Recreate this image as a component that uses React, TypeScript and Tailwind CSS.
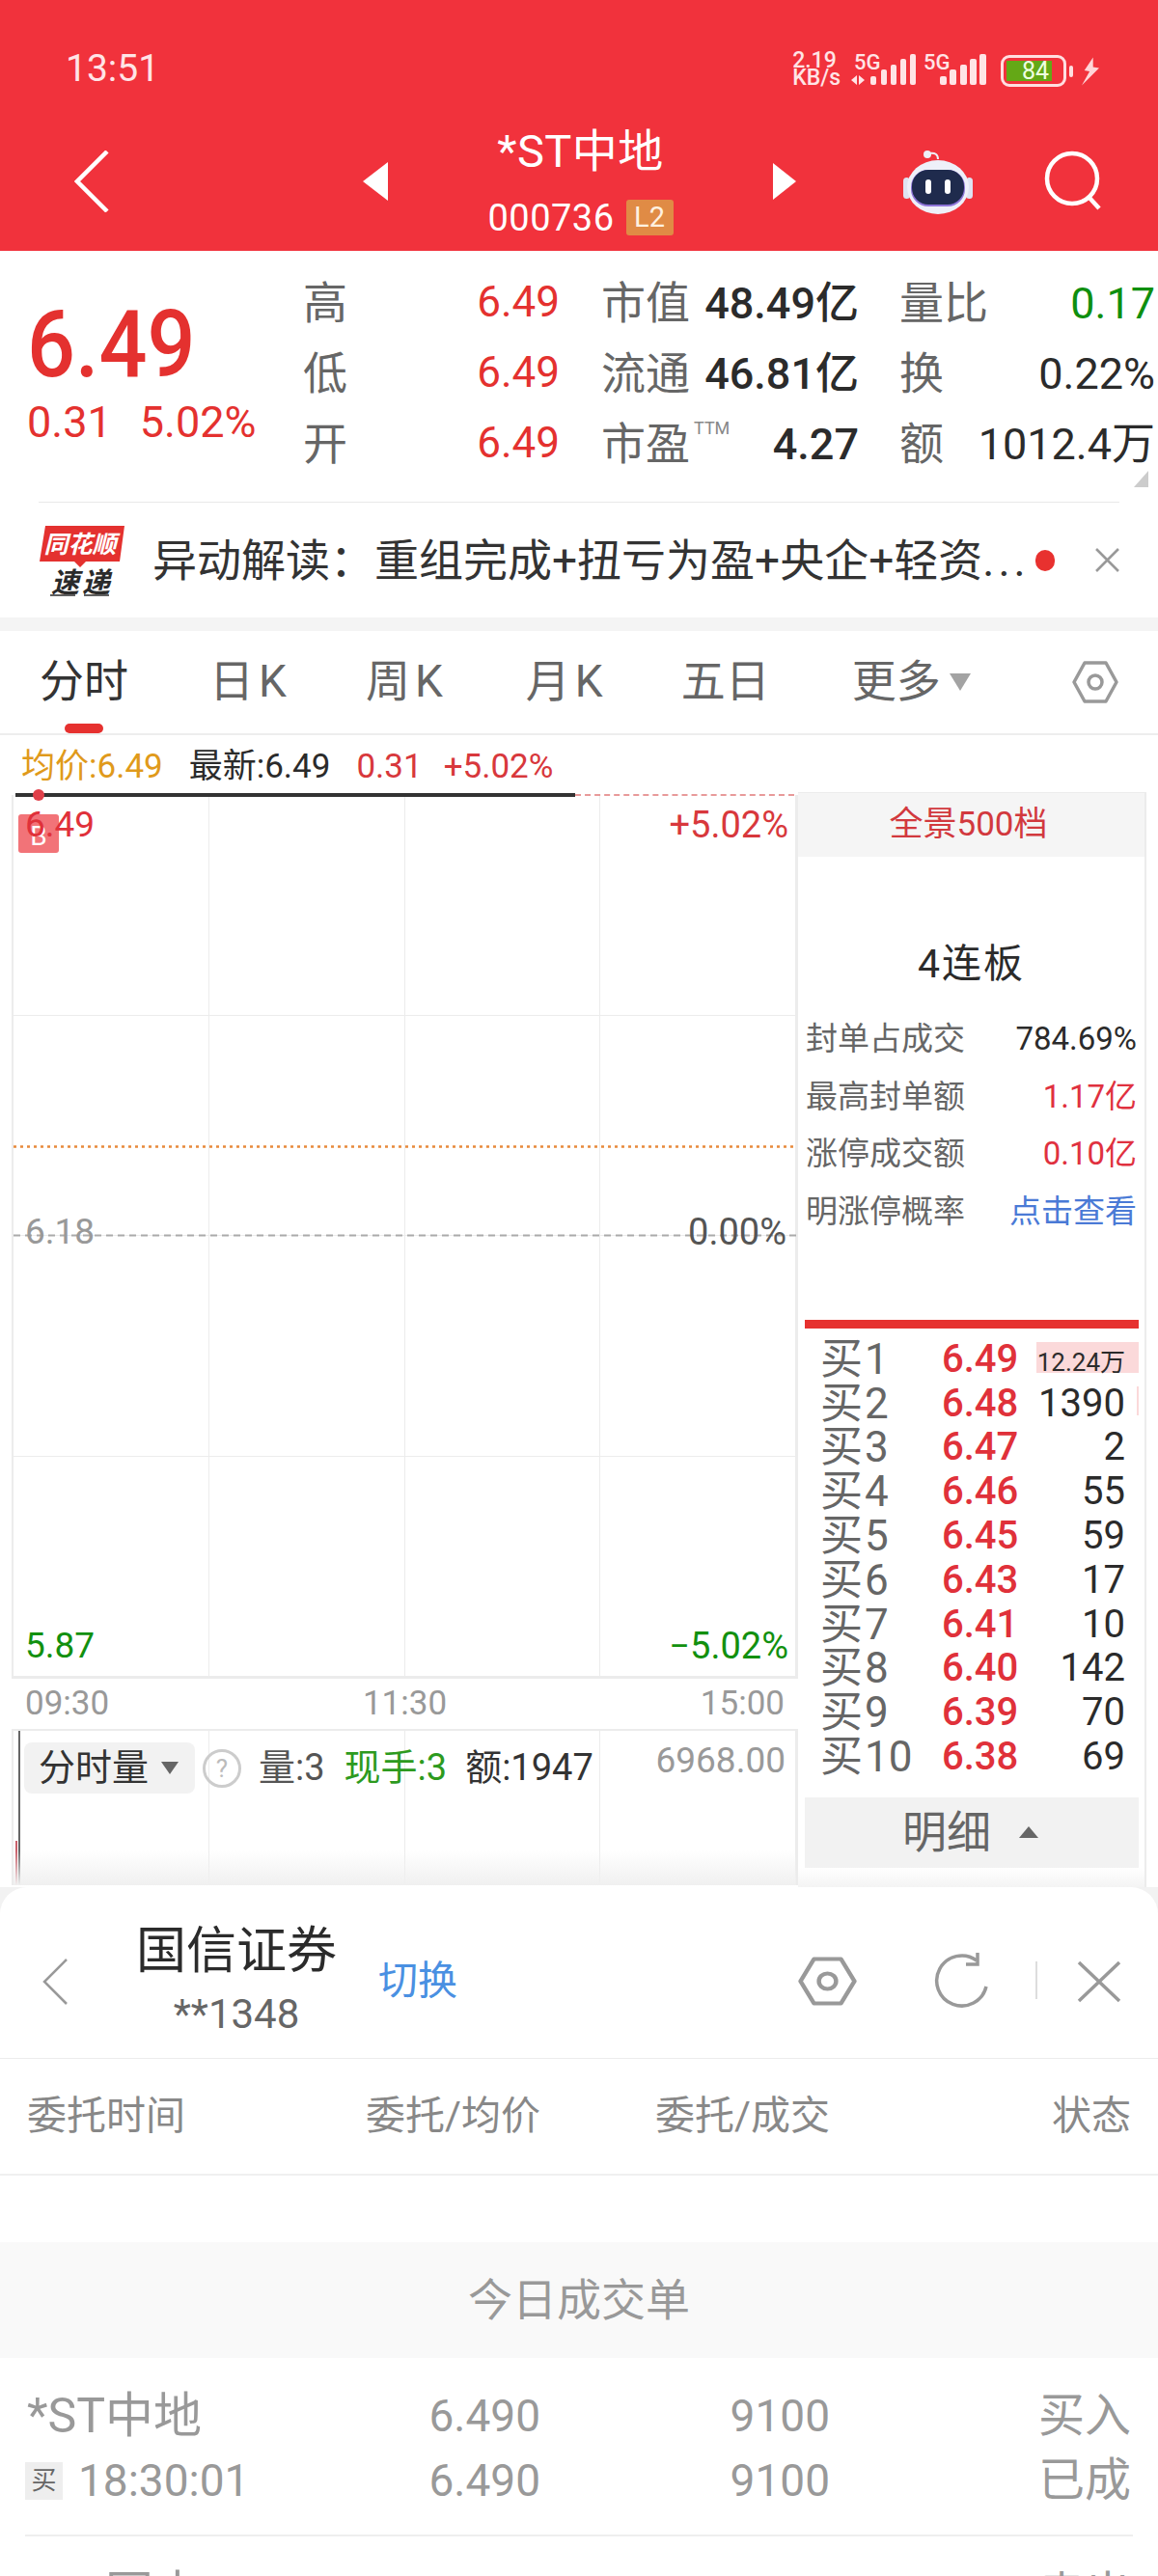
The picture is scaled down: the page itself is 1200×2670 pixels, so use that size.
import React from 'react'

const stats = [
  { a: '高', b: '市值', c: '48.49亿', d: '量比', e: '0.17', eColor: 'text-[#0f8f0f]' },
  { a: '低', b: '流通', c: '46.81亿', d: '换', e: '0.22%', eColor: 'text-[#2b2b2b]' },
  { a: '开', b: '市盈', c: '4.27', d: '额', e: '1012.4万', eColor: 'text-[#2b2b2b]', ttm: true },
]

const limitRows = [
  { label: '封单占成交', value: '784.69%', color: 'text-[#2b2b2b]' },
  { label: '最高封单额', value: '1.17亿', color: 'text-[#e0313f]' },
  { label: '涨停成交额', value: '0.10亿', color: 'text-[#e0313f]' },
  { label: '明涨停概率', value: '点击查看', color: 'text-[#4a7ad6]' },
]

const book = [
  ['1', '6.49', '12.24万'],
  ['2', '6.48', '1390'],
  ['3', '6.47', '2'],
  ['4', '6.46', '55'],
  ['5', '6.45', '59'],
  ['6', '6.43', '17'],
  ['7', '6.41', '10'],
  ['8', '6.40', '142'],
  ['9', '6.39', '70'],
  ['10', '6.38', '69'],
]

const gridCells = Array.from({ length: 16 }, (_, i) => i)
const colClass = 'grid grid-cols-[332px_200px_300px_312px] pl-[28px]'

function HexIcon({ className }: { className: string }) {
  return (
    <svg viewBox="0 0 48 46" preserveAspectRatio="none" className={className} fill="none" stroke="#999" strokeWidth="3.5" strokeLinejoin="round">
      <path d="M13 3h22l11 20-11 20H13L2 23z" />
      <circle cx="24" cy="23" r="7" />
    </svg>
  )
}

function Robot() {
  return (
    <svg viewBox="0 0 72 68" className="w-[72px] h-[68px] ml-[111px]">
      <circle cx="25" cy="6" r="4" fill="#eef0f8" />
      <path d="M27 5c6-1 9 1 9 6" fill="none" stroke="#eef0f8" strokeWidth="2" />
      <rect x="0" y="30" width="7" height="22" rx="3.5" fill="#dfe3f2" />
      <rect x="65" y="30" width="7" height="22" rx="3.5" fill="#dfe3f2" />
      <ellipse cx="36" cy="40" rx="32" ry="28" fill="#eef0f9" />
      <rect x="8" y="22" width="56" height="38" rx="18" fill="#8d74d8" />
      <rect x="9" y="22" width="54" height="36" rx="17" fill="#1f2b4d" />
      <rect x="23" y="32" width="6" height="15" rx="3" fill="#fff" />
      <rect x="43" y="32" width="6" height="15" rx="3" fill="#fff" />
    </svg>
  )
}

function StatusBar() {
  return (
    <div className="flex items-end justify-between h-[40px] pl-[68px] pr-[61px] text-[#ffe4e6]">
      <span className="text-[39px] leading-[40px] -mb-[1px]">13:51</span>
      <div className="flex items-end">
        <div className="flex flex-col items-start text-[23px] leading-[18px] font-medium">
          <span>2.19</span>
          <span>KB/s</span>
        </div>
        <div className="ml-[11px] w-[67px] relative h-[36px]">
          <span className="absolute left-[3px] top-[0px] text-[22px] leading-none font-medium">5G</span>
          <svg viewBox="0 0 67 36" className="absolute inset-0 w-[67px] h-[36px]" fill="#ffe4e6">
            <path d="M0 29l6-5v10zM8 24l6 5-6 5z" />
            <rect x="20" y="25" width="6" height="9" rx="2" />
            <rect x="31" y="18" width="6" height="16" rx="2" />
            <rect x="41" y="13" width="6" height="21" rx="2" />
            <rect x="51" y="7" width="6" height="27" rx="2" />
            <rect x="61" y="2" width="6" height="32" rx="2" />
          </svg>
        </div>
        <div className="ml-[8px] w-[65px] relative h-[36px]">
          <span className="absolute left-0 top-[0px] text-[22px] leading-none font-medium">5G</span>
          <svg viewBox="0 0 65 36" className="absolute inset-0 w-[65px] h-[36px]" fill="#ffe4e6">
            <rect x="17" y="25" width="7" height="9" rx="2" />
            <rect x="27" y="18" width="7" height="16" rx="2" />
            <rect x="38" y="13" width="7" height="21" rx="2" />
            <rect x="48" y="7" width="7" height="27" rx="2" />
            <rect x="58" y="2" width="7" height="32" rx="2" />
          </svg>
        </div>
        <div className="ml-[15px] w-[68px] h-[33px] rounded-[9px] border-[3px] border-[#ffdfe1] p-[3px]">
          <div className="w-[47px] h-full bg-[#64a816] flex items-center justify-end pr-[3px] text-[25px] leading-none text-[#f0ffe0]">84</div>
        </div>
        <div className="ml-[3px] w-[4px] h-[12px] rounded-[2px] bg-[#ffdfe1] mb-[10px]" />
        <svg viewBox="0 0 20 32" className="ml-[9px] w-[18px] h-[32px]" fill="#ffd5d8">
          <path d="M13 0L3 15l6 1-9 16L20 12l-7-1z" />
        </svg>
      </div>
    </div>
  )
}

function NavBar() {
  return (
    <div className="flex items-center mt-[40px] h-[115px] text-white">
      <svg viewBox="0 0 36 64" className="ml-[77px] w-[36px] h-[64px]" fill="none" stroke="#fff" strokeWidth="4.5">
        <path d="M34 1L3 32l31 31" />
      </svg>
      <div className="ml-[263px] w-0 h-0 border-y-[20px] border-y-transparent border-r-[26px] border-r-white" />
      <div className="w-[399px] flex flex-col items-center">
        <span className="text-[47px] leading-[56px] tracking-[0.5px]">*ST中地</span>
        <div className="flex items-center mt-[20px]">
          <span className="text-[38px] leading-[42px] tracking-[0.5px]">000736</span>
          <span className="ml-[12px] w-[49px] h-[37px] bg-[#e08b45] rounded-[3px] text-[#fff1e0] text-[29px] leading-[37px] text-center">L2</span>
        </div>
      </div>
      <div className="w-0 h-0 border-y-[19px] border-y-transparent border-l-[24px] border-l-white" />
      <Robot />
      <svg viewBox="0 0 60 64" className="ml-[74px] w-[60px] h-[64px]" fill="none" stroke="#fff" strokeWidth="4.5">
        <circle cx="29" cy="29" r="26" />
        <path d="M47 49l10 11" />
      </svg>
    </div>
  )
}

function QuoteBlock() {
  return (
    <div className="relative h-[261px] flex">
      <div className="w-[314px] pl-[28px] text-[#e4312f]">
        <div className="text-[88px] leading-[90px] font-medium mt-[52px] scale-y-110 origin-center">6.49</div>
        <div className="flex text-[45px] leading-[50px] mt-[11px]">
          <span>0.31</span>
          <span className="ml-[29px]">5.02%</span>
        </div>
      </div>
      <div className="flex flex-col pt-[18px]">
        {stats.map((s) => (
          <div key={s.a} className="flex h-[73px] items-center text-[46px] text-[#666]">
            <div className="w-[266px] flex justify-between">
              <span>{s.a}</span>
              <span className="text-[#e4312f] text-[44px]">6.49</span>
            </div>
            <div className="w-[267px] ml-[43px] flex justify-between items-center">
              <span className="relative">
                {s.b}
                {s.ttm && <span className="absolute left-[96px] top-[8px] text-[18px] leading-[20px] text-[#888]">TTM</span>}
              </span>
              <span className="text-[#2b2b2b] text-[45px] font-medium">{s.c}</span>
            </div>
            <div className="w-[265px] ml-[42px] flex justify-between items-center">
              <span>{s.d}</span>
              <span className={`${s.eColor} text-[45px]`}>{s.e}</span>
            </div>
          </div>
        ))}
      </div>
      <div className="absolute right-[10px] top-[228px] w-0 h-0 border-b-[17px] border-b-[#cccccc] border-l-[15px] border-l-transparent" />
      <div className="absolute left-[40px] right-[40px] bottom-0 h-[1px] bg-[#e9e9e9]" />
    </div>
  )
}

function NoticeBar() {
  return (
    <div className="h-[133px] flex items-center border-b-[14px] border-b-[#f4f4f4]">
      <svg viewBox="0 0 88 74" className="ml-[41px] w-[88px] h-[74px] shrink-0">
        <path d="M6 1h82l-5 37H48l-6 6-6-6H0z" fill="#e4312f" />
        <text x="42" y="29" textAnchor="middle" fontSize="25" fontWeight="700" fontStyle="italic" fill="#fff">同花顺</text>
        <text x="44" y="70" textAnchor="middle" fontSize="29" fontWeight="700" fontStyle="italic" letterSpacing="3" fill="#2b2b2b">速递</text>
        <path d="M11 73h26M46 73h26" stroke="#2b2b2b" strokeWidth="1.5" />
      </svg>
      <span className="ml-[29px] w-[915px] shrink-0 text-[46px] leading-[56px] text-[#333] whitespace-nowrap">
        异动解读：重组完成+扭亏为盈+央企+轻资<span className="tracking-[4px]">...</span>
      </span>
      <div className="w-[20px] h-[22px] rounded-full bg-[#e8312f] shrink-0" />
      <svg viewBox="0 0 24 24" className="ml-[42px] w-[25px] h-[25px] shrink-0" fill="none" stroke="#999" strokeWidth="2.5">
        <path d="M1 1l22 22M23 1L1 23" />
      </svg>
    </div>
  )
}

function Tabs() {
  return (
    <div className="relative flex items-center h-[108px] pl-[41px] pb-[1px] border-b-2 border-b-[#ededed] text-[46px] text-[#666] whitespace-nowrap">
      <span className="text-[#333]">分时</span>
      <span className="ml-[84px] tracking-[5px]">日K</span>
      <span className="ml-[77px] tracking-[5px]">周K</span>
      <span className="ml-[81px] tracking-[5px]">月K</span>
      <span className="ml-[76px]">五日</span>
      <span className="ml-[85px]">更多</span>
      <div className="ml-[9px] w-0 h-0 border-x-[11px] border-x-transparent border-t-[18px] border-t-[#a3a3a3]" />
      <HexIcon className="ml-[105px] w-[48px] h-[46px]" />
      <div className="absolute left-[67px] bottom-0 w-[40px] h-[10px] rounded-full bg-[#e6312f]" />
    </div>
  )
}

function Legend() {
  return (
    <div className="flex items-center h-[59px] pl-[22px] pt-[8px] text-[35px] whitespace-nowrap">
      <span className="text-[#e09a1b]">均价:6.49</span>
      <span className="ml-[27px] text-[#2b2b2b]">最新:6.49</span>
      <span className="ml-[27px] text-[#d8383c]">0.31</span>
      <span className="ml-[22px] text-[#d8383c]">+5.02%</span>
    </div>
  )
}

function PriceChart() {
  return (
    <div className="relative h-[914px] mt-[3px] grid grid-cols-4 grid-rows-4 border-l-2 border-r-2 border-[#ececec]">
      {gridCells.map((i) => (
        <div key={i} className="border-r border-b border-[#ececec]" />
      ))}
      <div className="absolute left-[2px] top-[-2px] w-[580px] h-[4px] bg-[#333]" />
      <div className="absolute left-[582px] right-[2px] top-[-1px] border-t-2 border-dashed border-[#e89a9a]" />
      <div className="absolute left-[20px] top-[-6px] w-[12px] h-[12px] rounded-full bg-[#e0404a]" />
      <div className="absolute left-[5px] top-[20px] w-[42px] h-[40px] rounded-[3px] bg-[#f27378] text-white text-[28px] leading-[46px] text-center">B</div>
      <div className="absolute left-[12px] top-[9px] text-[37px] leading-[44px] text-[#e0313a]">6.49</div>
      <div className="absolute right-[8px] top-[9px] text-[38px] leading-[44px] text-[#d8383c]">+5.02%</div>
      <svg className="absolute left-0 top-[363px] w-full h-[3px]">
        <line x1="0" y1="1.5" x2="100%" y2="1.5" stroke="#e88a3c" strokeWidth="2.5" strokeDasharray="3 4" />
      </svg>
      <svg className="absolute left-0 top-[455px] w-full h-[3px]">
        <line x1="0" y1="1.5" x2="100%" y2="1.5" stroke="#aaa" strokeWidth="2" strokeDasharray="7 5" />
      </svg>
      <div className="absolute left-[12px] top-[431px] text-[37px] leading-[44px] text-[#999]">6.18</div>
      <div className="absolute right-[10px] top-[431px] text-[38px] leading-[44px] text-[#555]">0.00%</div>
      <div className="absolute left-[12px] bottom-[10px] text-[37px] leading-[44px] text-[#12900f]">5.87</div>
      <div className="absolute right-[8px] bottom-[10px] text-[38px] leading-[44px] text-[#12900f]">−5.02%</div>
    </div>
  )
}

function VolumeChart() {
  return (
    <div className="relative h-[160px] grid grid-cols-4 border-x-2 border-[#ececec]">
      {[0, 1, 2, 3].map((i) => (
        <div key={i} className="border-r border-[#ececec]" />
      ))}
      <div className="absolute left-[5px] top-0 bottom-0 w-[2px] bg-[#666]" />
      <div className="absolute left-[2px] bottom-0 h-[46px] w-[2px] bg-[#c9606a]" />
      <div className="absolute left-[11px] right-[11px] top-[10px] flex items-center whitespace-nowrap">
        <div className="flex items-center w-[177px] h-[53px] pl-[15px] rounded-[8px] bg-[#f2f2f2] text-[38px] text-[#333]">
          分时量
          <div className="ml-[13px] w-0 h-0 border-x-[9px] border-x-transparent border-t-[13px] border-t-[#666]" />
        </div>
        <div className="ml-[8px] w-[40px] h-[40px] rounded-full border-[3px] border-[#ccc] text-[#bbb] text-[26px] leading-[34px] text-center">?</div>
        <span className="ml-[18px] text-[38px] text-[#555]">量:3</span>
        <span className="ml-[20px] text-[38px] text-[#2d9a1e]">现手:3</span>
        <span className="ml-[19px] text-[38px] text-[#333]">额:1947</span>
        <span className="ml-auto -mt-[16px] text-[37px] text-[#999]">6968.00</span>
      </div>
      <div className="absolute inset-x-0 bottom-0 h-[36px] bg-gradient-to-b from-transparent to-[#f0f0f0]" />
    </div>
  )
}

function SidePanel() {
  return (
    <div className="w-[361px] h-[1135px] border-t border-r-2 border-[#ececec] relative">
      <div className="h-[66px] bg-[#f5f5f5] flex items-center justify-center pr-[6px] text-[35px] text-[#d2393e]">全景500档</div>
      <div className="mt-[84px] h-[56px] flex items-center justify-center text-[41px] text-[#2b2b2b] tracking-[2px]">4连板</div>
      <div className="mt-[19px] mx-[8px] flex flex-col">
        {limitRows.map((r) => (
          <div key={r.label} className="flex items-center justify-between h-[59.5px] text-[33px] text-[#666]">
            <span>{r.label}</span>
            <span className={r.color}>{r.value}</span>
          </div>
        ))}
      </div>
      <div className="mt-[83px] ml-[7px] w-[346px] h-[9px] bg-[#e6312f]" />
      <div className="mt-[9px] ml-[7px] w-[346px] flex flex-col">
        {book.map(([n, price, vol], i) => (
          <div key={n} className="relative flex items-center h-[45.8px] pl-[16px] whitespace-nowrap">
            {i === 0 && <div className="absolute left-[240px] top-[5px] w-[106px] h-[32px] bg-[#fbd9da]" />}
            {i === 1 && <div className="absolute right-0 top-[5px] w-[2px] h-[30px] bg-[#fbd9da]" />}
            <span className="w-[126px] text-[44px] leading-none text-[#666]">买<span className="ml-[2px]">{n}</span></span>
            <span className="w-[78px] text-right text-[40px] leading-none font-medium text-[#e0313a]">{price}</span>
            <span className={`relative w-[112px] text-right leading-none text-[#2b2b2b] ${i === 0 ? 'text-[26px] pt-[6px]' : 'text-[40px]'}`}>{vol}</span>
          </div>
        ))}
      </div>
      <div className="mt-[19px] ml-[7px] w-[346px] h-[73px] bg-[#f2f2f2] flex items-center justify-center pr-[3px] text-[46px] text-[#666]">
        明细
        <div className="ml-[29px] w-0 h-0 border-x-[10px] border-x-transparent border-b-[12px] border-b-[#666]" />
      </div>
      <div className="absolute inset-x-0 bottom-0 h-[20px] bg-gradient-to-b from-transparent to-[#f4f4f4]" />
    </div>
  )
}

function TradeSheet() {
  return (
    <div className="rounded-t-[28px] bg-white">
      <div className="relative h-[178px] border-b border-b-[#ececec] flex items-start">
        <svg viewBox="0 0 28 48" className="ml-[43px] mt-[74px] w-[28px] h-[48px]" fill="none" stroke="#999" strokeWidth="2.5">
          <path d="M26 1L3 24l23 23" />
        </svg>
        <div className="ml-[71px] mt-[30px] w-[206px] flex flex-col items-center whitespace-nowrap">
          <span className="text-[52px] leading-[74px] text-[#2b2b2b]">国信证券</span>
          <span className="mt-[3px] text-[42px] leading-[50px] text-[#666]">**1348</span>
        </div>
        <span className="ml-[44px] mt-[72px] text-[41px] leading-[50px] text-[#4a90e2]">切换</span>
        <HexIcon className="ml-[353px] mt-[71px] w-[61px] h-[53px]" />
        <svg viewBox="0 0 58 60" className="ml-[79px] mt-[67px] w-[58px] h-[60px]" fill="none" stroke="#999" strokeWidth="3.5">
          <path d="M55 36A26 26 0 1 1 45 9" />
          <path d="M46 1v12H34" />
        </svg>
        <div className="ml-[48px] mt-[77px] w-[2px] h-[39px] bg-[#ddd]" />
        <svg viewBox="0 0 46 44" className="ml-[41px] mt-[76px] w-[46px] h-[44px]" fill="none" stroke="#999" strokeWidth="3.5">
          <path d="M2 2l42 40M44 2L2 42" />
        </svg>
      </div>
      <div className={`${colClass} h-[121px] items-center text-[41px] text-[#888] border-b-2 border-b-[#f0f0f0]`}>
        <span>委托时间</span>
        <span className="text-right whitespace-nowrap">委托/均价</span>
        <span className="text-right whitespace-nowrap">委托/成交</span>
        <span className="text-right">状态</span>
      </div>
      <div className="mt-[69px] h-[120px] bg-[#f9f9f9] flex items-center justify-center text-[46px] text-[#999]">今日成交单</div>
      <div className="h-[185px] flex flex-col">
        <div className={`${colClass} pt-[30px] text-[46px] leading-[60px] text-[#999]`}>
          <span className="text-[50px] whitespace-nowrap">*ST中地</span>
          <span className="text-right">6.490</span>
          <span className="text-right">9100</span>
          <span className="text-right text-[48px]">买入</span>
        </div>
        <div className={`${colClass} mt-[7px] text-[46px] leading-[60px] text-[#999]`}>
          <span className="flex items-center -ml-[2px]">
            <span className="w-[39px] h-[39px] bg-[#eeeeee] text-[26px] leading-[39px] text-center text-[#666]">买</span>
            <span className="ml-[16px]">18:30:01</span>
          </span>
          <span className="text-right">6.490</span>
          <span className="text-right">9100</span>
          <span className="text-right text-[48px]">已成</span>
        </div>
        <div className="mt-auto mx-[26px] h-[2px] bg-[#eeeeee]" />
      </div>
      <div className={`${colClass} pt-[30px] text-[46px] leading-[60px] text-[#999]`}>
        <span className="text-[50px] whitespace-nowrap">*ST国中</span>
        <span />
        <span />
        <span className="text-right text-[48px]">卖出</span>
      </div>
    </div>
  )
}

export default function App() {
  return (
    <div className="w-[1200px] h-[2670px] overflow-hidden bg-white font-['Roboto','Noto_Sans_CJK_SC',sans-serif]">
      <div className="h-[260px] bg-[#f1323c] pt-[50px]">
        <StatusBar />
        <NavBar />
      </div>
      <QuoteBlock />
      <NoticeBar />
      <Tabs />
      <Legend />
      <div className="flex h-[1135px]">
        <div className="w-[827px] pl-[12px]">
          <PriceChart />
          <div className="flex items-center justify-between h-[56px] px-[14px] border-y-2 border-y-[#ececec] text-[35px] text-[#999]">
            <span>09:30</span>
            <span>11:30</span>
            <span>15:00</span>
          </div>
          <VolumeChart />
        </div>
        <SidePanel />
      </div>
      <div className="bg-[#f2f2f2]">
        <TradeSheet />
      </div>
    </div>
  )
}
